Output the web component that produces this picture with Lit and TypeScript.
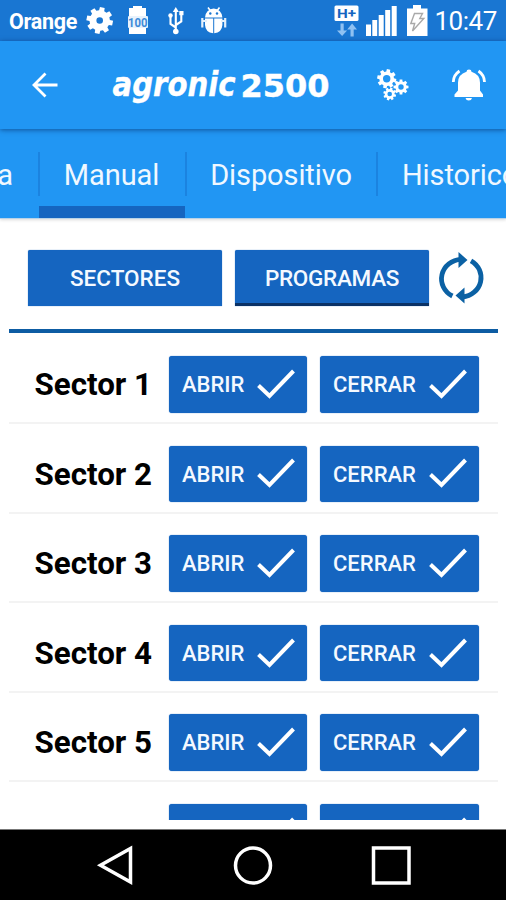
import { LitElement, html, css, svg } from "lit";
import { customElement, property } from "lit/decorators.js";

// Outline of a toothed wheel with a round hole, drawn with the even-odd rule.
function gear(cx: number, cy: number, outer: number, inner: number, hole: number, teeth: number, turn = 0): string {
  const step = (Math.PI * 2) / teeth;
  const at = (r: number, a: number) => `${(cx + r * Math.cos(a)).toFixed(2)} ${(cy + r * Math.sin(a)).toFixed(2)}`;
  const pts: string[] = [];
  for (let i = 0; i < teeth; i++) {
    const a = i * step + turn;
    pts.push(at(inner, a - step * 0.33), at(outer, a - step * 0.23), at(outer, a + step * 0.23), at(inner, a + step * 0.33));
  }
  return `M${pts.join("L")}ZM${cx - hole} ${cy}a${hole} ${hole} 0 1 0 ${hole * 2} 0a${hole} ${hole} 0 1 0 ${-hole * 2} 0Z`;
}

@customElement("status-bar")
class StatusBar extends LitElement {
  static styles = css`
    :host { display: flex; height: 41px; background: #1976d2; color: #fff; align-items: center; position: relative; }
    .carrier { font: 700 21.5px/41px Roboto, sans-serif; margin-left: 9px; width: 76px; padding-top: 2px; letter-spacing: -0.3px; }
    svg { display: block; flex: none; }
    .left { width: 148px; }
    .right { margin-left: 100px; width: 98px; }
    .clock { font: 400 26px/41px Roboto, sans-serif; margin-left: 3.5px; padding-top: 2px; letter-spacing: -0.5px; }
    .small { font: 700 13px Roboto, sans-serif; }
    .net { font: 700 13.5px Roboto, sans-serif; }
  `;
  render() {
    return html`
      <span class="carrier">Orange</span>
      <svg class="left" width="148" height="41" viewBox="85 0 148 41" fill="#fff">
        <path fill-rule="evenodd" d=${gear(99.7, 20.5, 13.4, 10.2, 3.3, 8, 0.2)} />
        <path d="M133 6h9v2h4v9h-17v-9h4zM129 27h17v7h-17z" />
        <rect x="128" y="16" width="20" height="12" rx="1" fill="#e8f2fc" />
        <text class="small" x="128" y="26.8" textLength="19.5" lengthAdjust="spacingAndGlyphs" fill="#3d8bd8">100</text>
        <path d="M175.8 7l3 5h-6z" />
        <circle cx="175.8" cy="31.5" r="2.8" />
        <path d="M175.8 11V31M175.8 27.5L170.5 24V16M175.8 25L181.3 21.5V13" fill="none" stroke="#fff" stroke-width="2.1" />
        <circle cx="170.5" cy="15.5" r="2.2" />
        <rect x="179.3" y="11" width="4.2" height="4.2" />
        <path d="M205 17.5a8.7 9 0 0 1 17.4 0zM205 18.5H213.2V33.2Q205.5 32.5 205 25zM214.2 18.5h8.2V25q-.5 7.5-8.2 8.2z" />
        <path d="M208 7.5l3 4M219.5 7.5l-3 4" stroke="#fff" stroke-width="1.6" fill="none" />
        <path d="M202.3 18V27.5M225.2 18V27.5M202 21h5M221 21h5" stroke="#e4f0fc" stroke-width="2.2" fill="none" />
        <circle cx="210.3" cy="13.5" r="1.2" fill="#1976d2" /><circle cx="217" cy="13.5" r="1.2" fill="#1976d2" />
      </svg>
      <svg class="right" width="98" height="41" viewBox="333 0 98 41" fill="#fff">
        <rect x="334.5" y="5.5" width="24" height="15.5" rx="1.5" />
        <text class="net" x="337" y="18" textLength="19" lengthAdjust="spacingAndGlyphs" fill="#1565c0">H+</text>
        <path d="M340.5 23.5h3.2V30.5h3.4L342.1 36L337 30.5H340.5zM350.5 36.5h3.2V29.5h3.3L352.1 23.5L347.2 29.5h3.3z" fill="#8fc1f2" />
        <path d="M366 24.5h5v11.5h-5zM372.3 20h4.9v16h-4.9zM378.7 15h5v21h-5zM385.2 10h5v26h-5zM391.7 6h5v30h-5z" />
        <path d="M413 5h8v3.5h6.5V36H407V8.5h6z" />
        <path d="M414.5 13.5h8l-2.7 5h4L412.5 31l2.2-7.5H410.8z" fill="none" stroke="#a9a9a9" stroke-width="1.4" />
      </svg>
      <span class="clock">10:47</span>
    `;
  }
}

@customElement("app-header")
class AppHeader extends LitElement {
  static styles = css`
    :host { display: block; height: 88px; background: #2196f3; box-shadow: 0 1px 5px rgba(0, 30, 80, 0.55); position: relative; z-index: 1; }
    svg { display: block; }
    .logo { font: italic 700 33px "DejaVu Sans", sans-serif; stroke: #fff; stroke-width: 0.4px; }
    .digits { font: 700 32.5px "DejaVu Sans", sans-serif; stroke: #fff; stroke-width: 0.4px; }
  `;
  render() {
    return html`
      <svg width="506" height="88" viewBox="0 41 506 88" fill="#fff">
        <path d="M57.5 85H34.5M45.5 73.5L34 85L45.5 96.5" fill="none" stroke="#fff" stroke-width="2.8" />
        <text class="logo" x="112.5" y="96" textLength="123" lengthAdjust="spacingAndGlyphs">agronic</text>
        <text class="digits" x="240.5" y="96.5" textLength="89" lengthAdjust="spacingAndGlyphs">2500</text>
        <path fill-rule="evenodd" d=${gear(386.7, 78.8, 9.7, 7.3, 3.7, 8, 0.2)} />
        <path fill-rule="evenodd" d=${gear(401, 87, 7.6, 5.7, 2.7, 8)} />
        <path fill-rule="evenodd" d=${gear(389.7, 94, 6.5, 4.9, 2.3, 8, 0.3)} />
        <path d="M469 69.5q2.5 0 2.5 2.3q8.5 2.5 8.5 11v7.7l3 4v2.5h-28.5v-2.5l3.5-4v-7.7q0-8.500 8.500-11q0-2.300 2.500-2.300zM465.500 98h6.500q-.5 2.500-3.200 2.500t-3.300-2.500z" />
        <path d="M453.300 82Q453.500 75 459.500 71M484.500 82Q484.300 75 478.500 71" fill="none" stroke="#fff" stroke-width="2.800" />
      </svg>
    `;
  }
}

@customElement("tab-strip")
class TabStrip extends LitElement {
  static styles = css`
    :host { display: flex; height: 90px; margin-bottom: -1px; overflow: hidden; background: #2196f3; border-bottom: 1px solid #b9d3e8; box-sizing: border-box; box-shadow: 0 1px 3px rgba(0, 0, 0, 0.15); color: #f0f8ff; font: 400 29px/89px Roboto, sans-serif; letter-spacing: -0.1px; }
    .tab { box-sizing: border-box; flex: none; display: flex; flex-direction: column; align-items: center; white-space: nowrap; height: 89px; position: relative; }
    .label { line-height: 92px; height: 77px; }
    .first { width: 39px; align-items: flex-end; padding-right: 26px; }
    .manual { width: 147px; }
    .manual .label { margin-right: 2px; }
    .device { width: 191px; }
    .device .label { margin-right: 1px; }
    .history { width: 160px; align-items: flex-start; padding-left: 25px; }
    .tab + .tab::before { content: ""; position: absolute; left: -1px; top: 23px; width: 2px; height: 44px; background: #1b83e0; }
    .bar { width: 146px; height: 12px; align-self: flex-start; background: #1565c0; }
  `;
  render() {
    return html`
      <div class="tab first"><span class="label">Programa</span></div>
      <div class="tab manual"><span class="label">Manual</span><span class="bar"></span></div>
      <div class="tab device"><span class="label">Dispositivo</span></div>
      <div class="tab history"><span class="label">Historicos</span></div>
    `;
  }
}

@customElement("sector-row")
class SectorRow extends LitElement {
  @property() name = "";
  static styles = css`
    :host { display: flex; box-sizing: border-box; height: 89.6px; padding: 21.5px 19px 0 0; border-bottom: 2px solid #f3f3f3; }
    .name { width: 160px; box-sizing: border-box; padding-left: 25.5px; font: 700 31.3px/58px Roboto, sans-serif; color: #000; white-space: nowrap; }
    button { appearance: none; border: 0; height: 56.5px; padding: 0 12px 0 13px; display: flex; align-items: center; justify-content: space-between; border-radius: 3px; background: #1565c0; color: #f4f9ff; font: 500 22px/26px Roboto, sans-serif; box-shadow: 0 0 1px #1565c0; white-space: nowrap; }
    button span { padding-top: 1.5px; }
    .open { width: 138px; margin-right: 13px; }
    .close { width: 159px; }
    svg { display: block; flex: none; }
  `;
  render() {
    const check = svg`<path d="M1.5 16.5L12.5 27L36.5 2" fill="none" stroke="#fff" stroke-width="4"/>`;
    return html`
      <span class="name">${this.name}</span>
      <button class="open"><span>ABRIR</span><svg width="38" height="31">${check}</svg></button>
      <button class="close"><span>CERRAR</span><svg width="38" height="31">${check}</svg></button>
    `;
  }
}

@customElement("app-root")
class AppRoot extends LitElement {
  static styles = css`
    :host { display: flex; flex-direction: column; height: 900px; width: 506px; background: #fff; overflow: hidden; }
    .modes { display: flex; flex: none; height: 111px; box-sizing: border-box; padding: 32px 0 0 28px; }
    .mode { appearance: none; border: 0; padding: 0; width: 194px; height: 56px; margin-right: 13px; background: #1565c0; color: #f4f9ff; font: 500 22.5px/57px Roboto, sans-serif; border-radius: 2px 2px 0 0; box-shadow: 0 0 1px #1565c0; }
    .mode.under { box-shadow: inset 0 -3px #0b3266, 0 0 1px #1565c0; margin-right: 8px; letter-spacing: -0.3px; }
    .modes svg { margin-top: 1px; }
    .list { flex: none; height: 491px; margin: 0 8px 0 9px; padding-top: 1.5px; box-sizing: border-box; border-top: 4px solid #0d5ca3; overflow: hidden; }
    .nav { margin-top: 9px; flex: 1; background: #000; border-top: 1px solid #777; }
    .nav svg { display: block; }
  `;
  render() {
    return html`
      <status-bar></status-bar>
      <app-header></app-header>
      <tab-strip></tab-strip>
      <div class="modes">
        <button class="mode">SECTORES</button>
        <button class="mode under">PROGRAMAS</button>
        <svg width="50" height="54" viewBox="436 251 50 54">
          <path d="M451.4 296A20.5 19.5 0 0 1 460 259.3M470 260.8A20.5 19.5 0 0 1 461.5 297" fill="none" stroke="#0b61a4" stroke-width="4.8" />
          <path d="M457.5 252L466.5 260L457.5 268zM463.5 287.5L454.5 295.5L463.5 303.5z" fill="#0b61a4" />
        </svg>
      </div>
      <div class="list">
        ${[1, 2, 3, 4, 5, 6].map((n) => html`<sector-row name=${`Sector ${n}`}></sector-row>`)}
      </div>
      <div class="nav">
        <svg width="506" height="70" viewBox="0 830 506 70" fill="none" stroke="#fff" stroke-width="3.5">
          <path d="M130.5 848.5V882L100.5 865.2z" />
          <circle cx="253" cy="865.5" r="17.5" />
          <rect x="373.5" y="848" width="35.5" height="35" />
        </svg>
      </div>
    `;
  }
}
